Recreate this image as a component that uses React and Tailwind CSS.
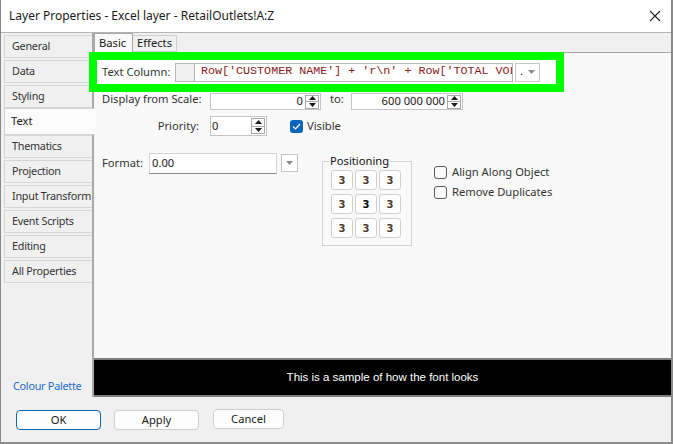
import React from "react";

function Spin({ h = "h-[14px]" }) {
  return (
    <div className={`flex flex-col w-[14px] ${h} border border-[#a8a8a8] bg-[#fdfdfd]`}>
      <div className="flex-1 flex items-center justify-center border-b border-[#a8a8a8]">
        <svg width="7" height="4" viewBox="0 0 7 4"><path d="M0 4 L3.5 0 L7 4Z" fill="#1a1a1a" /></svg>
      </div>
      <div className="flex-1 flex items-center justify-center">
        <svg width="7" height="4" viewBox="0 0 7 4"><path d="M0 0 L3.5 4 L7 0Z" fill="#1a1a1a" /></svg>
      </div>
    </div>
  );
}

function DownArrow() {
  return (
    <svg width="7" height="4" viewBox="0 0 7 4"><path d="M0 0 L3.5 4 L7 0Z" fill="#8a8a8a" /></svg>
  );
}

function CheckBox({ checked }) {
  if (checked) {
    return (
      <div className="w-[13px] h-[13px] rounded-[3px] bg-[#0a63bd] flex items-center justify-center">
        <svg width="9" height="7" viewBox="0 0 9 7"><path d="M1 3.5 L3.5 6 L8 1" stroke="#fff" strokeWidth="1.2" fill="none" /></svg>
      </div>
    );
  }
  return <div className="w-[13px] h-[13px] rounded-[3px] border border-[#5a5a5a] bg-[#fbfbfb]" />;
}

const tabs = [
  "General",
  "Data",
  "Styling",
  "Text",
  "Thematics",
  "Projection",
  "Input Transform",
  "Event Scripts",
  "Editing",
  "All Properties",
];

export default function App() {
  return (
    <div className="w-[673px] h-[444px] flex flex-col bg-[#f0f0f0] border-l border-r-2 border-b-2 border-[#8a8a8a] font-['Noto_Sans',sans-serif] text-[11.2px] text-[#1a1a1a] overflow-hidden whitespace-nowrap">
      {/* Title bar */}
      <div className="h-[33px] shrink-0 bg-white border-b border-[#b4b4b4] flex items-center justify-between pl-[8px] pr-[9px]">
        <span className="text-[12px] text-[#1a1a1a]">Layer Properties - Excel layer - RetailOutlets!A:Z</span>
        <svg width="12" height="12" viewBox="0 0 12 12" className="mr-[1px]">
          <path d="M1 1 L11 11 M11 1 L1 11" stroke="#222" strokeWidth="1.1" />
        </svg>
      </div>

      {/* Main area */}
      <div className="h-[364px] shrink-0 flex">
        {/* Left tabs */}
        <div className="w-[92px] shrink-0 flex flex-col pt-[2px] pl-[3px] text-[10.8px] tracking-[-0.25px]">
          {tabs.map((t) =>
            t === "Text" ? (
              <div
                key={t}
                className="h-[27px] -mt-[2px] w-[91px] bg-[#fbfbfb] border border-[#d4d4d4] border-r-0 flex items-center pl-[6px] text-[11.2px] tracking-normal text-[#1a1a1a] relative z-10"
              >
                {t}
              </div>
            ) : (
              <div
                key={t}
                className="h-[23px] mb-[2px] border border-[#d6d6d6] bg-[#f0f0f0] flex items-center pl-[7px] text-[#333]"
              >
                {t}
              </div>
            )
          )}
          <div className="mt-auto pb-[3px] pl-[9px] text-[#1b6ac9]">Colour Palette</div>
        </div>

        {/* Right content */}
        <div className="flex-1 flex flex-col border-l-2 border-[#a9a9a9] -ml-[1px]">
          {/* inner tabs */}
          <div className="h-[19px] shrink-0 flex items-end">
            <div className="h-[20px] w-[39px] -mb-[1px] bg-[#f9f9f9] border border-b-0 border-[#a8a8a8] flex items-center pl-[4px] relative z-10">
              Basic
            </div>
            <div className="h-[17px] w-[44px] bg-[#f0f0f0] border border-l-0 border-[#d0d0d0] flex items-center pl-[4px]">
              Effects
            </div>
          </div>

          {/* panel */}
          <div className="flex-1 bg-[#f9f9f9] border-t border-[#a8a8a8] flex flex-col pl-[8px]">
            {/* Text column row with highlight */}
            <div className="-ml-[13px] -mt-[1px] w-[475px] h-[40px] border-[8px] border-[#00ff00] bg-white flex items-center pl-[5px] shrink-0 relative z-20">
              <span className="w-[73px] text-[#333]">Text Column:</span>
              <div className="h-[19px] flex border border-[#b8b8b8]">
                <div className="w-[19px] bg-[#f0f0f0] border-r border-[#b8b8b8]" />
                <div className="w-[317px] bg-white flex items-center pl-[6px] overflow-hidden whitespace-nowrap font-['Liberation_Mono',monospace] text-[11.7px] text-[#8b1a1a]">
                  Row['CUSTOMER NAME'] + 'r\n' + Row['TOTAL VOL
                </div>
              </div>
              <div className="ml-[2px] h-[19px] w-[25px] border border-[#c8c8c8] bg-white flex items-center justify-between px-[4px]">
                <span className="leading-none -mt-[2px]">.</span>
                <DownArrow />
              </div>
            </div>

            {/* Display from scale */}
            <div className="h-[17px] mt-[1px] flex items-center shrink-0">
              <span className="w-[108px] text-[#333] -mt-[4px]">Display from Scale:</span>
              <div className="w-[111px] h-[17px] border border-[#c4c4c4] bg-white flex items-center pl-[2px]">
                <span className="flex-1 text-right pr-[2px]">0</span>
                <Spin />
                <div className="w-[1px]" />
              </div>
              <span className="w-[30px] pl-[9px] text-[#333] -mt-[4px]">to:</span>
              <div className="w-[112px] h-[17px] border border-[#c4c4c4] bg-white flex items-center pl-[2px]">
                <span className="flex-1 text-right pr-[2px]">600 000 000</span>
                <Spin />
                <div className="w-[1px]" />
              </div>
            </div>

            {/* Priority */}
            <div className="h-[20px] mt-[6px] flex items-center shrink-0">
              <span className="w-[108px] text-right pr-[11px] text-[#333]">Priority:</span>
              <div className="w-[57px] h-[20px] border border-[#c4c4c4] bg-white flex items-center pl-[1px] pr-[1px]">
                <span className="flex-1">0</span>
                <Spin h="h-[16px]" />
              </div>
              <div className="ml-[23px]">
                <CheckBox checked />
              </div>
              <span className="ml-[4px] text-[#333]">Visible</span>
            </div>

            {/* Format / positioning / checkboxes */}
            <div className="mt-[17px] flex items-start shrink-0">
              <span className="w-[47px] h-[21px] flex items-center text-[#333]">Format:</span>
              <div className="w-[128px] h-[21px] bg-white border border-[#d4d4d4] border-b-[#8a8a8a] flex items-center pl-[2px]">
                0.00
              </div>
              <div className="ml-[4px] mt-[1px] w-[17px] h-[18px] bg-white border border-[#c4c4c4] flex items-center justify-center">
                <DownArrow />
              </div>
              <fieldset className="ml-[24px] w-[90px] border border-[#d4d4d4] px-[7px] pb-[7px]">
                <legend className="leading-[16px] px-[1px] -ml-[1px] text-[#111]">Positioning</legend>
                <div className="mt-[1px] ml-[1px] grid grid-cols-[22px_22px_22px] grid-rows-[20px_20px_20px] gap-x-[2px] gap-y-[4px]">
                  {[0, 1, 2, 3, 4, 5, 6, 7, 8].map((i) => (
                    <div
                      key={i}
                      className={`bg-white border border-[#cfcfcf] rounded-[3px] flex items-center justify-center font-['DejaVu_Sans',sans-serif] font-bold text-[10px] ${i === 4 ? "text-black" : "text-[#4a3a30]"}`}
                    >
                      3
                    </div>
                  ))}
                </div>
              </fieldset>
              <div className="ml-[22px] mt-[13px] flex flex-col gap-[7px]">
                <div className="h-[13px] flex items-center">
                  <CheckBox />
                  <span className="ml-[5px] text-[#333]">Align Along Object</span>
                </div>
                <div className="h-[13px] flex items-center">
                  <CheckBox />
                  <span className="ml-[5px] text-[#333]">Remove Duplicates</span>
                </div>
              </div>
            </div>
          </div>

          {/* sample bar */}
          <div className="h-[39px] shrink-0 bg-black border-y-2 border-[#7c7c7c] flex items-center justify-center text-white font-['Liberation_Sans',sans-serif] text-[11.5px]">
            This is a sample of how the font looks
          </div>
        </div>
      </div>

      {/* Buttons */}
      <div className="flex-1 flex items-start pt-[13px] pl-[15px]">
        <button className="w-[85px] h-[20px] rounded-[4px] bg-[#fdfdfd] border-[1.5px] border-[#0a67c0] flex items-center justify-center text-[#1a1a1a]">
          OK
        </button>
        <button className="ml-[13px] w-[85px] h-[20px] rounded-[4px] bg-[#fdfdfd] border border-[#cfcfcf] flex items-center justify-center text-[#1a1a1a]">
          Apply
        </button>
        <button className="ml-[14px] -mt-[1px] w-[71px] h-[20px] rounded-[4px] bg-[#fdfdfd] border border-[#cfcfcf] flex items-center justify-center text-[#1a1a1a]">
          Cancel
        </button>
      </div>
    </div>
  );
}
